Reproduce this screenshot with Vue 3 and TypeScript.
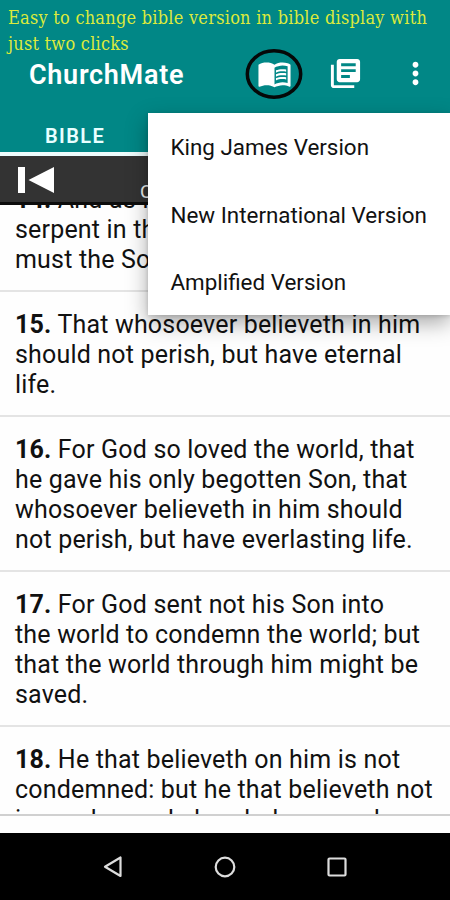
<script setup lang="ts">
interface Verse {
  number: number
  lines: string[]
}

const versions: string[] = ['King James Version', 'New International Version', 'Amplified Version']

const verses: Verse[] = [
  { number: 14, lines: ['And as Moses lifted up the', 'serpent in the wilderness, even', 'must the Son of man be lifted'] },
  { number: 15, lines: ['That whosoever believeth in him', 'should not perish, but have eternal', 'life.'] },
  { number: 16, lines: ['For God so loved the world, that', 'he gave his only begotten Son, that', 'whosoever believeth in him should', 'not perish, but have everlasting life.'] },
  { number: 17, lines: ['For God sent not his Son into', 'the world to condemn the world; but', 'that the world through him might be', 'saved.'] },
  { number: 18, lines: ['He that believeth on him is not', 'condemned: but he that believeth not', 'is condemned already, because he'] },
]
</script>

<template>
  <div class="screen">
    <header class="header">
      <p class="caption">Easy to change bible version in bible display with<br />just two clicks</p>
      <div class="appbar">
        <h1 class="title">ChurchMate</h1>
        <div class="book">
          <svg class="ring" width="58" height="52" viewBox="0 0 58 52">
            <ellipse cx="29" cy="26" rx="26.7" ry="23.2" fill="none" stroke="#050808" stroke-width="3.5" />
          </svg>
          <svg class="icon pages" viewBox="0 0 24 24">
            <path d="M21 5c-1.11-.35-2.33-.5-3.5-.5-1.95 0-4.05.4-5.5 1.5-1.45-1.1-3.55-1.5-5.5-1.5S2.45 4.9 1 6v14.65c0 .25.25.5.5.5.1 0 .15-.05.25-.05C3.1 20.45 5.05 20 6.5 20c1.95 0 4.05.4 5.5 1.5 1.35-.85 3.8-1.5 5.5-1.5 1.65 0 3.35.3 4.75 1.05.1.05.15.05.25.05.25 0 .5-.25.5-.5V6c-.6-.45-1.25-.75-2-1zm0 13.5c-1.1-.35-2.3-.5-3.5-.5-1.7 0-4.15.65-5.5 1.5V8c1.35-.85 3.8-1.5 5.5-1.5 1.2 0 2.4.15 3.5.5v11.5z" />
            <path d="M17.5 10.5c.88 0 1.73.09 2.5.26V9.24c-.79-.15-1.64-.24-2.5-.24-1.7 0-3.24.29-4.5.83v1.66c1.13-.64 2.7-.99 4.5-.99zM13 12.49v1.66c1.13-.64 2.7-.99 4.5-.99.88 0 1.73.09 2.5.26V11.900c-.79-.15-1.64-.24-2.5-.24-1.7 0-3.24.3-4.5.83zM17.500 14.330c-1.7 0-3.24.29-4.5.83v1.66c1.130-.64 2.7-.99 4.5-.99.88 0 1.73.09 2.5.26v-1.52c-.79-.16-1.64-.24-2.5-.24z" />
          </svg>
        </div>
        <svg class="icon library" viewBox="0 0 24 24">
          <path d="M4 6H2v14c0 1.1.9 2 2 2h14v-2H4V6zm16-4H8c-1.1 0-2 .9-2 2v12c0 1.1.9 2 2 2h12c1.100 0 2-.9 2-2V4c0-1.1-.9-2-2-2zm-1 9H9V9h10v2zm-4 4H9v-2h6v2zm4-8H9V5h10v2z" />
        </svg>
        <svg class="icon more" viewBox="0 0 24 24">
          <path d="M12 8c1.1 0 2-.9 2-2s-.9-2-2-2-2 .9-2 2 .9 2 2 2zm0 2c-1.1 0-2 .9-2 2s.9 2 2 2 2-.9 2-2-.9-2-2-2zm0 6c-1.1 0-2 .9-2 2s.9 2 2 2 2-.9 2-2-.9-2-2-2z" />
        </svg>
      </div>
      <nav class="tabs"><span class="tab">BIBLE</span></nav>
    </header>

    <div class="player">
      <svg width="36" height="26" viewBox="0 0 36 26" fill="#fff">
        <path d="M0 0h7v26H0zM36 0v26L10.500 13z" />
      </svg>
      <span class="chapter">C</span>
    </div>

    <main class="verses">
      <article v-for="verse in verses" :key="verse.number" class="verse">
        <p v-for="(line, i) in verse.lines" :key="i" class="line">
          <b v-if="i === 0">{{ verse.number }}.</b>{{ i === 0 ? ' ' : '' }}{{ line }}
        </p>
      </article>
    </main>

    <footer class="navbar">
      <svg width="22" height="24" viewBox="0 0 22 24"><path d="M18.500 2.500v18.500L3 11.700z" /></svg>
      <svg width="24" height="24" viewBox="0 0 24 24"><circle cx="12" cy="12" r="9.300" /></svg>
      <svg width="22" height="24" viewBox="0 0 22 24"><rect x="2.500" y="3.500" width="17" height="17" rx="1" /></svg>
    </footer>

    <div class="menu">
      <div v-for="version in versions" :key="version" class="option">{{ version }}</div>
    </div>
  </div>
</template>

<style>
body {
  margin: 0;
}
</style>

<style scoped>
.screen {
  position: relative;
  display: flex;
  flex-direction: column;
  width: 450px;
  height: 900px;
  overflow: hidden;
  background: #fefefe;
  color: #111;
  font-family: Roboto, sans-serif;
}
.header {
  display: flex;
  flex-direction: column;
  height: 156px;
  flex: none;
  background: #018786;
}
.caption {
  margin: 0;
  padding: 5px 0 0 8px;
  height: 50px;
  box-sizing: border-box;
  color: #dcea3c;
  font-family: "DejaVu Serif Condensed", "DejaVu Serif", serif;
  font-stretch: condensed;
  font-size: 18px;
  letter-spacing: 0.240px;
  line-height: 26px;
  white-space: nowrap;
}
.appbar {
  display: flex;
  align-items: center;
  height: 48px;
  padding-left: 29px;
}
.title {
  width: 216px;
  margin: 2px 0 0;
  color: #fff;
  font-size: 27px;
  font-weight: 600;
  letter-spacing: 0.7px;
  line-height: 32px;
}
.book {
  display: grid;
  place-items: center;
  width: 58px;
}
.book > * {
  grid-area: 1 / 1;
}
.icon {
  width: 35px;
  height: 35px;
  fill: #fff;
}
.pages {
  margin-bottom: 2px;
}
.library {
  margin: 0 0 1px 25px;
}
.more {
  margin: 0 0 1px 35px;
}
.tabs {
  flex: 1;
  box-sizing: border-box;
  border-bottom: 4px solid #eefcfc;
  padding-left: 45px;
  display: flex;
  align-items: center;
}
.tab {
  padding-top: 21px;
  color: #e8ffff;
  font-size: 20px;
  font-weight: 600;
  line-height: 24px;
  letter-spacing: 1.4px;
}
.player {
  box-sizing: border-box;
  display: flex;
  height: 49px;
  flex: none;
  padding: 11px 0 0 18px;
  background: #333;
  border-bottom: 3px solid #0c0c0c;
}
.chapter {
  margin: 14px 0 0 86px;
  color: #eee;
  font-size: 19px;
  line-height: 22px;
}
.verses {
  height: 609px;
  flex: none;
  overflow: hidden;
  border-bottom: 2px solid #d0d0d0;
}
.verse {
  padding: 18px 15px 15px;
  border-bottom: 2px solid #e4e4e4;
}
.verse:first-child {
  margin-top: -38px;
}
.line {
  margin: 0;
  font-size: 25px;
  letter-spacing: 0.180px;
  line-height: 30px;
  white-space: nowrap;
}
.navbar {
  display: flex;
  justify-content: space-between;
  align-items: center;
  height: 67px;
  margin-top: auto;
  padding: 0 102px;
  background: #000;
}
.navbar svg {
  fill: none;
  stroke: #ddd;
  stroke-width: 2.2;
  stroke-linejoin: round;
}
.menu {
  position: absolute;
  top: 113px;
  left: 148px;
  right: 0;
  height: 202px;
  display: flex;
  flex-direction: column;
  background: #fff;
  box-shadow: 0 8px 20px rgba(0, 0, 0, 0.34), 0 1px 4px rgba(0, 0, 0, 0.15);
}
.option {
  height: 67.500px;
  padding-left: 22.500px;
  font-size: 22.400px;
  line-height: 69px;
  white-space: nowrap;
}
</style>
